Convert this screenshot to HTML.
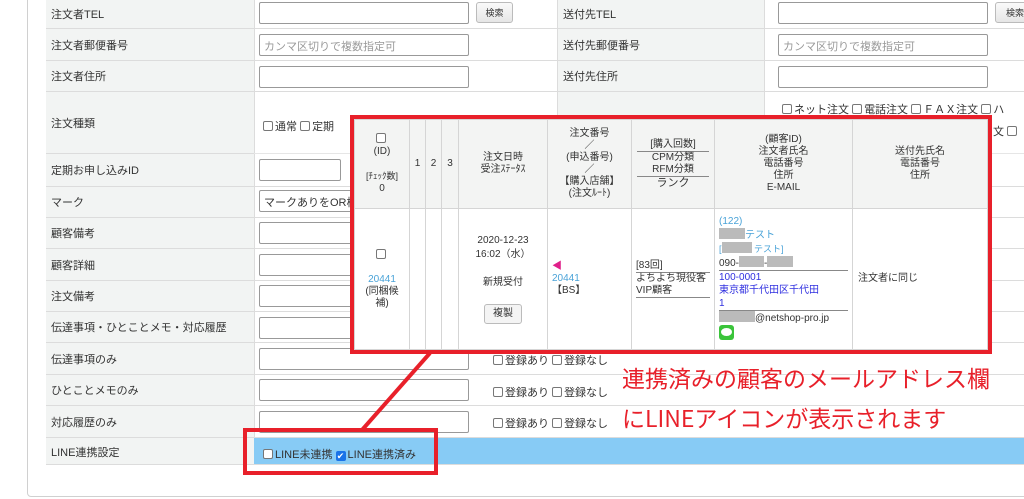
<!DOCTYPE html>
<html><head><meta charset="utf-8"><style>
*{box-sizing:border-box;margin:0;padding:0}
body{width:1024px;height:499px;overflow:hidden;background:#fff;font-family:"Liberation Sans","Noto Sans CJK JP",sans-serif;font-size:11px;color:#333;position:relative}
.a{position:absolute}
.lab{position:absolute;background:#f2f4f3;border-bottom:1px solid #dcdcdc;padding-left:5px;display:flex;align-items:center}
.val{position:absolute;border-bottom:1px solid #dcdcdc}
.inp{position:absolute;border:1px solid #999;border-radius:2px;background:#fff;height:22px;color:#999;font-size:11px;padding:3px 4px;white-space:nowrap;overflow:hidden}
.btn{position:absolute;border:1px solid #bbb;border-radius:3px;background:linear-gradient(#fafafa,#e6e6e6);font-size:9px;text-align:center;line-height:20px;height:21px}
.cb{display:inline-block;width:10px;height:10px;border:1px solid #777;border-radius:2px;vertical-align:-1px;margin-right:2px;background:#fff}
.chk{font-size:11px;color:#333;white-space:nowrap}
.pt{position:absolute;border-collapse:collapse;font-size:10px;text-align:center;line-height:12px}
.pt td{border:1px solid #d5d5d5;vertical-align:middle}
.lk{color:#4aa3d8}
.bl{color:#3030e0}
.gr{display:inline-block;background:#bbb;height:11px;vertical-align:-1px}
</style></head><body>
<div class="a" style="left:27px;top:-5px;width:1010px;height:502px;border:1px solid #d0d0d0;border-radius:4px"></div>
<div class="a" style="left:46px;top:0;width:1px;height:465px;background:#dcdcdc"></div>
<div class="a" style="left:254px;top:0;width:1px;height:465px;background:#dcdcdc"></div>

<div class="lab" style="left:46px;top:0;width:208px;height:29px">注文者TEL</div>
<div class="lab" style="left:46px;top:29px;width:208px;height:32px">注文者郵便番号</div>
<div class="lab" style="left:46px;top:61px;width:208px;height:31px">注文者住所</div>
<div class="lab" style="left:46px;top:92px;width:208px;height:62px">注文種類</div>
<div class="lab" style="left:46px;top:154px;width:208px;height:33px">定期お申し込みID</div>
<div class="lab" style="left:46px;top:187px;width:208px;height:31px;align-items:flex-start;padding-top:7px">マーク</div>
<div class="lab" style="left:46px;top:218px;width:208px;height:31px">顧客備考</div>
<div class="lab" style="left:46px;top:249px;width:208px;height:32px">顧客詳細</div>
<div class="lab" style="left:46px;top:281px;width:208px;height:31px">注文備考</div>
<div class="lab" style="left:46px;top:312px;width:208px;height:31px">伝達事項・ひとことメモ・対応履歴</div>
<div class="lab" style="left:46px;top:343px;width:208px;height:32px">伝達事項のみ</div>
<div class="lab" style="left:46px;top:375px;width:208px;height:31px">ひとことメモのみ</div>
<div class="lab" style="left:46px;top:406px;width:208px;height:32px">対応履歴のみ</div>
<div class="lab" style="left:46px;top:438px;width:208px;height:27px;align-items:flex-start;padding-top:6px">LINE連携設定</div>

<div class="val" style="left:254px;top:0;width:770px;height:29px"></div>
<div class="val" style="left:254px;top:29px;width:770px;height:32px"></div>
<div class="val" style="left:254px;top:61px;width:770px;height:31px"></div>
<div class="val" style="left:254px;top:92px;width:770px;height:62px;border-color:#e6e6e6"></div>
<div class="val" style="left:254px;top:154px;width:770px;height:33px"></div>
<div class="val" style="left:254px;top:187px;width:770px;height:31px"></div>
<div class="val" style="left:254px;top:218px;width:770px;height:31px"></div>
<div class="val" style="left:254px;top:249px;width:770px;height:32px"></div>
<div class="val" style="left:254px;top:281px;width:770px;height:31px"></div>
<div class="val" style="left:254px;top:312px;width:770px;height:31px"></div>
<div class="val" style="left:254px;top:343px;width:770px;height:32px"></div>
<div class="val" style="left:254px;top:375px;width:770px;height:31px"></div>
<div class="val" style="left:254px;top:406px;width:770px;height:32px"></div>
<div class="a" style="left:254px;top:438px;width:770px;height:27px;background:#87cbf5;border-bottom:1px solid #dcdcdc"></div>

<div class="lab" style="left:557px;top:0;width:208px;height:29px;border-left:1px solid #dcdcdc;border-right:1px solid #dcdcdc">送付先TEL</div>
<div class="lab" style="left:557px;top:29px;width:208px;height:32px;border-left:1px solid #dcdcdc;border-right:1px solid #dcdcdc">送付先郵便番号</div>
<div class="lab" style="left:557px;top:61px;width:208px;height:31px;border-left:1px solid #dcdcdc;border-right:1px solid #dcdcdc">送付先住所</div>
<div class="lab" style="left:557px;top:92px;width:208px;height:62px;border-left:1px solid #dcdcdc;border-right:1px solid #dcdcdc"></div>

<div class="inp" style="left:259px;top:2px;width:210px"></div>
<div class="btn" style="left:476px;top:2px;width:37px">検索</div>
<div class="inp" style="left:259px;top:34px;width:210px">カンマ区切りで複数指定可</div>
<div class="inp" style="left:259px;top:66px;width:210px"></div>
<div class="a chk" style="left:263px;top:118px"><span class="cb"></span>通常 <span class="cb"></span>定期</div>
<div class="inp" style="left:259px;top:159px;width:82px"></div>
<div class="inp" style="left:259px;top:190px;width:100px;color:#333">マークありをOR検</div>
<div class="inp" style="left:259px;top:222px;width:100px"></div>
<div class="inp" style="left:259px;top:254px;width:100px"></div>
<div class="inp" style="left:259px;top:285px;width:100px"></div>
<div class="inp" style="left:259px;top:317px;width:100px"></div>
<div class="inp" style="left:259px;top:348px;width:210px"></div>
<div class="inp" style="left:259px;top:379px;width:210px"></div>
<div class="inp" style="left:259px;top:411px;width:210px"></div>
<div class="a chk" style="left:493px;top:352px"><span class="cb"></span>登録あり <span class="cb"></span>登録なし</div>
<div class="a chk" style="left:493px;top:384px"><span class="cb"></span>登録あり <span class="cb"></span>登録なし</div>
<div class="a chk" style="left:493px;top:415px"><span class="cb"></span>登録あり <span class="cb"></span>登録なし</div>
<div class="a chk" style="left:263px;top:446px"><span class="cb"></span>LINE未連携 <span class="cb" style="background:#1a73e8;border-color:#1a73e8;color:#fff;font-size:9px;line-height:9px;text-align:center">✔</span>LINE連携済み</div>

<div class="inp" style="left:778px;top:2px;width:210px"></div>
<div class="btn" style="left:995px;top:2px;width:40px">検索</div>
<div class="inp" style="left:778px;top:34px;width:210px">カンマ区切りで複数指定可</div>
<div class="inp" style="left:778px;top:66px;width:210px"></div>
<div class="a chk" style="left:782px;top:101px"><span class="cb"></span>ネット注文 <span class="cb"></span>電話注文 <span class="cb"></span>ＦＡＸ注文 <span class="cb"></span>ハ</div>
<div class="a chk" style="left:993px;top:123px">文 <span class="cb"></span></div>

<div class="a" style="left:350px;top:115px;width:642px;height:239px;border:4px solid #e8202a;background:#fff"></div>
<table class="pt" style="left:354px;top:119px;width:634px;height:231px">
<tr style="height:89px;background:#f3f4f3">
<td style="width:55px"><span class="cb"></span><br>(ID)<br><br><span style="font-size:9px">[ﾁｪｯｸ数]</span><br>0</td>
<td style="width:16px">1</td><td style="width:16px">2</td><td style="width:17px">3</td>
<td style="width:89px">注文日時<br>受注ｽﾃｰﾀｽ</td>
<td style="width:84px">注文番号<br>／<br>(申込番号)<br>／<br>【購入店舗】<br>(注文ﾙｰﾄ)</td>
<td style="width:83px;padding:0 5px"><div style="border-bottom:1px solid #888">[購入回数]</div><div>CPM分類</div><div style="border-bottom:1px solid #888">RFM分類</div><div style="font-size:11px">ランク</div></td>
<td style="width:138px">(顧客ID)<br>注文者氏名<br>電話番号<br>住所<br>E-MAIL</td>
<td>送付先氏名<br>電話番号<br>住所</td>
</tr>
<tr style="background:#fff">
<td><span class="cb"></span><br><br><span class="lk">20441</span><br>(同梱候<br>補)</td>
<td></td><td></td><td></td>
<td style="line-height:14px">2020-12-23<br>16:02（水）<br><br>新規受付<br><br><span style="display:inline-block;border:1px solid #bbb;border-radius:3px;padding:2px 8px;background:#f4f4f4">複製</span></td>
<td style="text-align:left;padding-left:4px"><span style="color:#e0208a">◀</span><br><span class="lk">20441</span><br>【BS】</td>
<td style="text-align:left;padding:0 4px"><div>[83回]</div><div style="border-top:1px solid #888">よちよち現役客</div><div style="border-bottom:1px solid #888">VIP顧客</div></td>
<td style="text-align:left;padding:0 4px;line-height:13px"><span class="lk">(122)</span><br><span class="gr" style="width:26px"></span><span class="lk">テスト</span><br><span class="lk" style="font-size:9px">[<span class="gr" style="width:30px"></span> テスト]</span><br><div style="border-bottom:1px solid #888">090-<span class="gr" style="width:25px"></span>-<span class="gr" style="width:26px"></span></div><span class="bl">100-0001<br>東京都千代田区千代田<br>1</span><div style="border-top:1px solid #888"><span class="gr" style="width:36px"></span>@netshop-pro.jp</div><span style="display:inline-block;width:15px;height:15px;background:#3ac43a;border-radius:3px;position:relative"><span style="position:absolute;left:2px;top:3px;width:11px;height:8px;background:#fff;border-radius:50%"></span></span></td>
<td style="text-align:left;padding-left:5px">注文者に同じ</td>
</tr></table>

<svg class="a" style="left:0;top:0" width="1024" height="499"><line x1="430" y1="353" x2="362" y2="430" stroke="#e8202a" stroke-width="4"/></svg>
<div class="a" style="left:243px;top:428px;width:195px;height:47px;border:4px solid #e8202a"></div>
<div class="a" style="left:622px;top:357px;color:#e8202a;font-size:23px;line-height:40px;white-space:nowrap;font-family:'Noto Sans CJK JP',sans-serif">連携済みの顧客のメールアドレス欄<br>にLINEアイコンが表示されます</div>
</body></html>
